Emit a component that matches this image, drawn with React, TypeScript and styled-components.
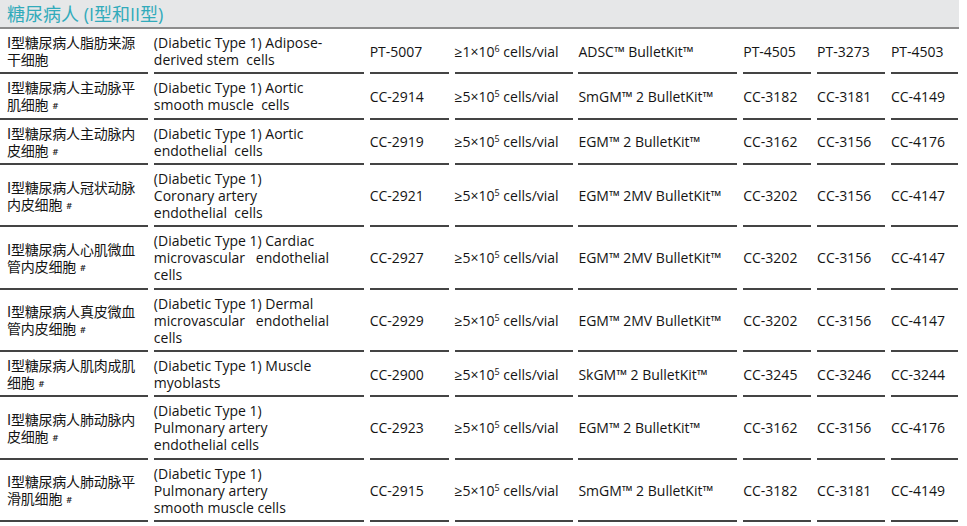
import React from "react";
import styled, { createGlobalStyle } from "styled-components";

const GlobalStyle = createGlobalStyle`
  body {
    margin: 0;
    background: #fff;
    font-family: "Open Sans", "Noto Sans CJK SC", sans-serif;
    color: #141414;
  }
`;

const Page = styled.div`
  width: 959px;
`;

const Banner = styled.div`
  display: flex;
  align-items: center;
  height: 27px;
  padding-left: 7px;
  background: #e6e7e8;
  border-bottom: 2px solid #8c8c8c;
  color: #32abbb;
  font-family: "Open Sans", "Noto Sans CJK SC", sans-serif;
  font-size: 18px;
  line-height: 24px;
`;

const Grid = styled.div`
  display: grid;
  grid-template-columns: 148px 210px 79px 118px 159px 68px 68px 67px;
  column-gap: 5.85px;
  width: 958px;
`;

const Cell = styled.div<{ $first?: boolean }>`
  display: flex;
  flex-direction: column;
  justify-content: center;
  padding: 5px 0 4.35px ${(p) => (p.$first ? "7px" : "0")};
  border-bottom: 2px solid #444;
  font-size: 14px;
  line-height: 17px;
  white-space: pre;
  font-family: ${(p) =>
    p.$first
      ? `"Noto Sans CJK SC", "Open Sans", sans-serif`
      : `"Open Sans", "Noto Sans CJK SC", sans-serif`};
  letter-spacing: ${(p) => (p.$first ? "-0.2px" : "0")};
`;

const Line = styled.div`
  height: 17px;
  overflow: visible;
`;

const Hash = styled.span`
  font-family: "Open Sans", sans-serif;
  font-size: 9px;
  font-weight: 600;
  line-height: 0;
  margin-left: 4px;
  vertical-align: 1px;
`;

const Sup = styled.sup`
  font-size: 9px;
  line-height: 0;
  vertical-align: 5px;
`;

type Row = {
  cn: [string, string];
  hash: boolean;
  en: string[];
  cat: string;
  exp: string;
  kit: string;
  a: string;
  b: string;
  c: string;
};

const rows: Row[] = [
  {
    cn: ["I型糖尿病人脂肪来源", "干细胞"],
    hash: false,
    en: ["(Diabetic Type 1) Adipose-", "derived stem  cells"],
    cat: "PT-5007",
    exp: "1",
    kit: "ADSC™ BulletKit™",
    a: "PT-4505",
    b: "PT-3273",
    c: "PT-4503",
  },
  {
    cn: ["I型糖尿病人主动脉平", "肌细胞"],
    hash: true,
    en: ["(Diabetic Type 1) Aortic", "smooth muscle  cells"],
    cat: "CC-2914",
    exp: "5",
    kit: "SmGM™ 2 BulletKit™",
    a: "CC-3182",
    b: "CC-3181",
    c: "CC-4149",
  },
  {
    cn: ["I型糖尿病人主动脉内", "皮细胞"],
    hash: true,
    en: ["(Diabetic Type 1) Aortic", "endothelial  cells"],
    cat: "CC-2919",
    exp: "5",
    kit: "EGM™ 2 BulletKit™",
    a: "CC-3162",
    b: "CC-3156",
    c: "CC-4176",
  },
  {
    cn: ["I型糖尿病人冠状动脉", "内皮细胞"],
    hash: true,
    en: ["(Diabetic Type 1)", "Coronary artery", "endothelial  cells"],
    cat: "CC-2921",
    exp: "5",
    kit: "EGM™ 2MV BulletKit™",
    a: "CC-3202",
    b: "CC-3156",
    c: "CC-4147",
  },
  {
    cn: ["I型糖尿病人心肌微血", "管内皮细胞"],
    hash: true,
    en: ["(Diabetic Type 1) Cardiac", "microvascular   endothelial", "cells"],
    cat: "CC-2927",
    exp: "5",
    kit: "EGM™ 2MV BulletKit™",
    a: "CC-3202",
    b: "CC-3156",
    c: "CC-4147",
  },
  {
    cn: ["I型糖尿病人真皮微血", "管内皮细胞"],
    hash: true,
    en: ["(Diabetic Type 1) Dermal", "microvascular   endothelial", "cells"],
    cat: "CC-2929",
    exp: "5",
    kit: "EGM™ 2MV BulletKit™",
    a: "CC-3202",
    b: "CC-3156",
    c: "CC-4147",
  },
  {
    cn: ["I型糖尿病人肌肉成肌", "细胞"],
    hash: true,
    en: ["(Diabetic Type 1) Muscle", "myoblasts"],
    cat: "CC-2900",
    exp: "5",
    kit: "SkGM™ 2 BulletKit™",
    a: "CC-3245",
    b: "CC-3246",
    c: "CC-3244",
  },
  {
    cn: ["I型糖尿病人肺动脉内", "皮细胞"],
    hash: true,
    en: ["(Diabetic Type 1)", "Pulmonary artery", "endothelial cells"],
    cat: "CC-2923",
    exp: "5",
    kit: "EGM™ 2 BulletKit™",
    a: "CC-3162",
    b: "CC-3156",
    c: "CC-4176",
  },
  {
    cn: ["I型糖尿病人肺动脉平", "滑肌细胞"],
    hash: true,
    en: ["(Diabetic Type 1)", "Pulmonary artery", "smooth muscle cells"],
    cat: "CC-2915",
    exp: "5",
    kit: "SmGM™ 2 BulletKit™",
    a: "CC-3182",
    b: "CC-3181",
    c: "CC-4149",
  },
];

export default function App() {
  return (
    <Page>
      <GlobalStyle />
      <Banner>糖尿病人 (I型和II型)</Banner>
      <Grid>
        {rows.map((r) => (
          <React.Fragment key={r.cat}>
            <Cell $first>
              <Line>{r.cn[0]}</Line>
              <Line>
                {r.cn[1]}
                {r.hash && <Hash>#</Hash>}
              </Line>
            </Cell>
            <Cell>
              {r.en.map((line) => (
                <Line key={line}>{line}</Line>
              ))}
            </Cell>
            <Cell>{r.cat}</Cell>
            <Cell>
              <Line>
                ≥{r.exp}×10<Sup>{r.exp === "1" ? "6" : "5"}</Sup> cells/vial
              </Line>
            </Cell>
            <Cell>{r.kit}</Cell>
            <Cell>{r.a}</Cell>
            <Cell>{r.b}</Cell>
            <Cell>{r.c}</Cell>
          </React.Fragment>
        ))}
      </Grid>
    </Page>
  );
}
